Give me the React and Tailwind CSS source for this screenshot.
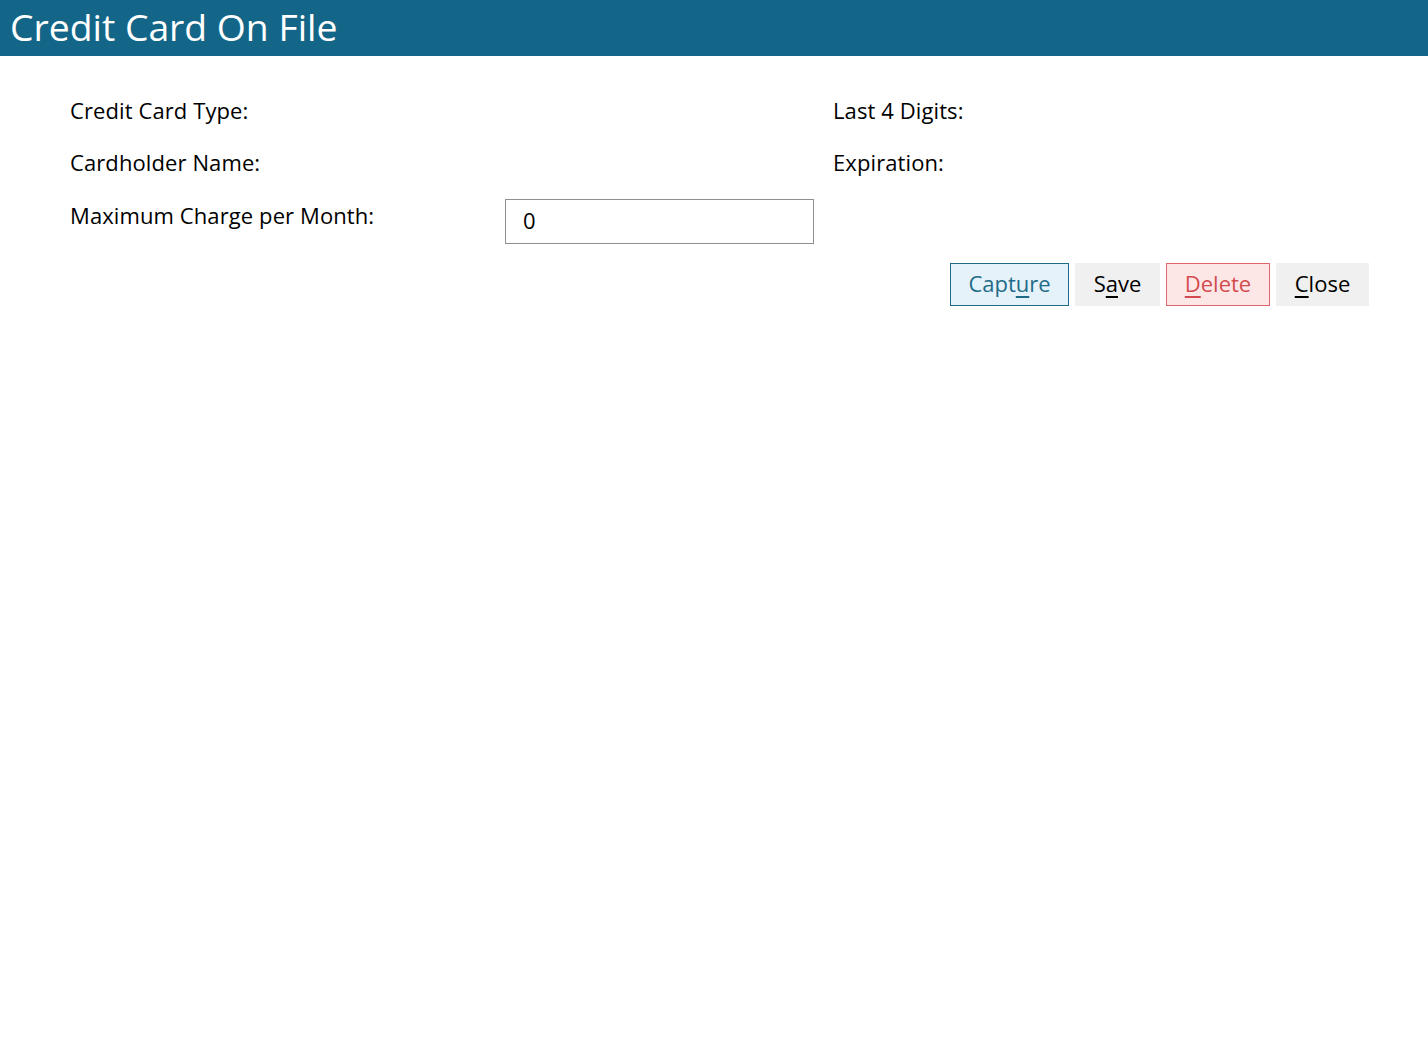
import React, { useState } from 'react'

const App = () => {
  const [maxCharge, setMaxCharge] = useState('0')

  return (
    <div className="min-h-screen bg-white text-black" style={{ fontFamily: '"Open Sans", sans-serif' }}>
      <div className="h-[56px] bg-[#146688] flex items-center px-[10px] pb-[2px]">
        <h1 className="text-[37.3px] leading-none text-white">Credit Card On File</h1>
      </div>

      <div className="pl-[70px] pr-[59px] pt-[34px]">
        <div className="grid grid-cols-[435px_309px_19px_1fr] text-[22px] tracking-[0.1px]">
          <div className="h-[52px] leading-[40px]">Credit Card Type:</div>
          <div />
          <div />
          <div className="h-[52px] leading-[40px]">Last 4 Digits:</div>

          <div className="h-[52px] leading-[40px]">Cardholder Name:</div>
          <div />
          <div />
          <div className="h-[52px] leading-[40px]">Expiration:</div>

          <div className="leading-[40px] pt-[1px]">Maximum Charge per Month:</div>
          <input
            value={maxCharge}
            onChange={(e) => setMaxCharge(e.target.value)}
            className="mt-[5px] h-[45px] w-full border border-[#8f8f8f] px-[17px] pb-[4px] text-[22px] outline-none"
          />
          <div />
          <div />
        </div>

        <div className="flex justify-end gap-[6px] mt-[19px] text-[22px]">
          <button className="h-[43px] w-[119px] pb-[3px] border border-[#1d6a86] bg-[#e5f2fa] text-[#1f6b88]">
            Capt<span className="underline decoration-2 underline-offset-[4px]">u</span>re
          </button>
          <button className="h-[43px] w-[85px] pb-[3px] bg-[#f0f0f0] text-black">
            S<span className="underline decoration-2 underline-offset-[4px]">a</span>ve
          </button>
          <button className="h-[43px] w-[104px] pb-[3px] border border-[#e0666d] bg-[#fde6e6] text-[#d24c4f]">
            <span className="underline decoration-2 underline-offset-[4px]">D</span>elete
          </button>
          <button className="h-[43px] w-[93px] pb-[3px] bg-[#f0f0f0] text-black">
            <span className="underline decoration-2 underline-offset-[4px]">C</span>lose
          </button>
        </div>
      </div>
    </div>
  )
}

export default App
